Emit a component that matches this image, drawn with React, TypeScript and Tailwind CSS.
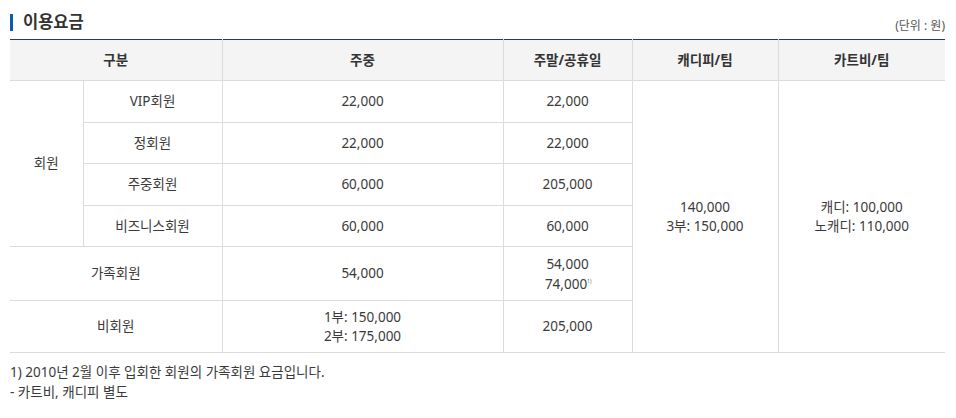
const font = { fontFamily: '"Noto Sans", "Noto Sans CJK KR", sans-serif' }

type Row = {
  sub: string
  weekday: string
  weekend: string
  h: string
}

const rows: Row[] = [
  { sub: 'VIP회원', weekday: '22,000', weekend: '22,000', h: 'h-[42px]' },
  { sub: '정회원', weekday: '22,000', weekend: '22,000', h: 'h-[41px]' },
  { sub: '주중회원', weekday: '60,000', weekend: '205,000', h: 'h-[42px]' },
  { sub: '비즈니스회원', weekday: '60,000', weekend: '60,000', h: 'h-[41px]' },
]

export default function App() {
  const td = 'border border-[#dcdcdc] text-center align-middle'

  return (
    <div className="w-[956px] h-[418px] bg-white px-[10px] pt-[13px] text-[#3a3a3a]" style={font}>
      <div className="flex items-end justify-between h-[18px]">
        <h2 className="flex items-center gap-[10px] text-[16.5px] font-bold leading-[18px] text-[#333]">
          <span className="w-[3px] h-[17px] bg-[#0a5cb0]" />
          이용요금
        </h2>
        <span className="text-[12px] text-[#555] leading-none mr-[1px] mb-[-1px]">(단위 : 원)</span>
      </div>

      <table className="mt-[8px] w-[935px] border-collapse border-t border-t-[#2b3a55] text-[13.5px] table-fixed">
        <colgroup>
          <col className="w-[73px]" />
          <col className="w-[139px]" />
          <col className="w-[281px]" />
          <col className="w-[129px]" />
          <col className="w-[146px]" />
          <col className="w-[167px]" />
        </colgroup>
        <thead>
          <tr className="h-[41px] bg-[#f4f4f4] font-bold text-[#333]">
            <th colSpan={2} className={`${td} border-l-0 border-t-[#2b3a55]`}>구분</th>
            <th className={`${td} border-t-[#2b3a55]`}>주중</th>
            <th className={`${td} border-t-[#2b3a55]`}>주말/공휴일</th>
            <th className={`${td} border-t-[#2b3a55]`}>캐디피/팀</th>
            <th className={`${td} border-r-0 border-t-[#2b3a55]`}>카트비/팀</th>
          </tr>
        </thead>
        <tbody>
          {rows.map((r, i) => (
            <tr key={r.sub} className={r.h}>
              {i === 0 && (
                <td rowSpan={4} className={`${td} border-l-0`}>회원</td>
              )}
              <td className={td}>{r.sub}</td>
              <td className={td}>{r.weekday}</td>
              <td className={td}>{r.weekend}</td>
              {i === 0 && (
                <>
                  <td rowSpan={6} className={`${td} leading-[19px]`}>
                    140,000<br />3부: 150,000
                  </td>
                  <td rowSpan={6} className={`${td} border-r-0 leading-[19px]`}>
                    캐디: 100,000<br />노캐디: 110,000
                  </td>
                </>
              )}
            </tr>
          ))}
          <tr className="h-[54px]">
            <td colSpan={2} className={`${td} border-l-0`}>가족회원</td>
            <td className={td}>54,000</td>
            <td className={`${td} leading-[20px]`}>
              54,000<br />74,000<span className="inline-block w-[3px] text-[5px] leading-none align-[6px] text-[#666]">1)</span>
            </td>
          </tr>
          <tr className="h-[52px]">
            <td colSpan={2} className={`${td} border-l-0`}>비회원</td>
            <td className={`${td} leading-[19px]`}>1부: 150,000<br />2부: 175,000</td>
            <td className={td}>205,000</td>
          </tr>
        </tbody>
      </table>

      <div className="mt-[9px] text-[13.5px] leading-[20px]">
        <p>1) 2010년 2월 이후 입회한 회원의 가족회원 요금입니다.</p>
        <p>- 카트비, 캐디피 별도</p>
      </div>
    </div>
  )
}
